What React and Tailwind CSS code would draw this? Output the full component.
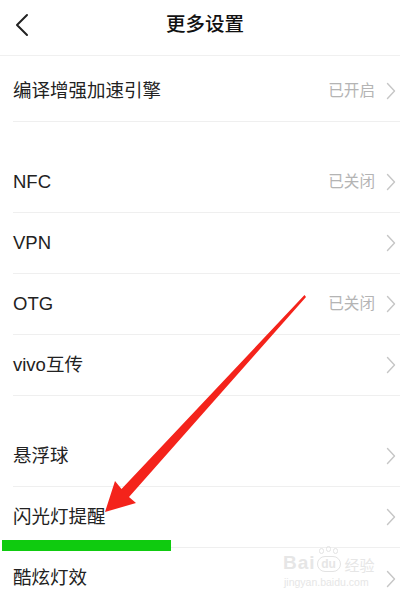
import React from "react";

const Chevron = () => (
  <svg width="10" height="18" viewBox="0 0 10 18" className="shrink-0">
    <path d="M1.5 1.5 L8.5 9 L1.5 16.5" fill="none" stroke="#c6c6c6" strokeWidth="1.4" strokeLinecap="round" strokeLinejoin="round" />
  </svg>
);

const Row = ({ label, value, last }) => (
  <div className="h-[61px] flex items-center pl-[13px]">
    <div className={"h-full flex-1 flex items-center pr-[4px] " + (last ? "" : "border-b border-[#efefef]")}>
      <span className="flex-1 text-[18.5px] text-[#222222] leading-none">{label}</span>
      {value && <span className="text-[15.6px] text-[#b4b4b4] mr-[11px] leading-none">{value}</span>}
      <Chevron />
    </div>
  </div>
);

export default function App() {
  return (
    <div
      className="relative w-[400px] h-[601px] overflow-hidden bg-white"
      style={{ fontFamily: '"Liberation Sans", "Noto Sans CJK SC", sans-serif' }}
    >
      <div className="h-[56px] flex items-center justify-center relative border-b border-[#f0f0f0]">
        <svg width="16" height="24" viewBox="0 0 16 24" className="absolute left-[14px] top-[13px]">
          <path d="M13 2 L3 12 L13 22" fill="none" stroke="#222" strokeWidth="2" strokeLinecap="round" strokeLinejoin="round" />
        </svg>
        <span className="text-[19.5px] text-[#111] font-medium leading-none ml-[10px] -mt-[6px]">更多设置</span>
      </div>
      <div className="h-[5px]" />
      <Row label="编译增强加速引擎" value="已开启" />
      <div className="h-[30px]" />
      <Row label="NFC" value="已关闭" />
      <Row label="VPN" />
      <Row label="OTG" value="已关闭" />
      <Row label="vivo互传" />
      <div className="h-[30px]" />
      <Row label="悬浮球" />
      <Row label="闪光灯提醒" />
      <Row label="酷炫灯效" last />

      {/* overlays */}
      <div className="absolute left-[2px] top-[540px] w-[169px] h-[11px] bg-[#0fcb0f]" />
      <svg className="absolute left-0 top-0" width="400" height="601" viewBox="0 0 400 601">
        <polygon
          points="105,512 115,481 121.5,489 304.5,295 306,297 129,497 136,503"
          fill="#f4231b"
        />
      </svg>
      <div className="absolute left-[283px] top-[546px] flex items-end text-[#e6e6e6] leading-none select-none">
        <span className="text-[19px] font-bold tracking-[1px]">Bai</span>
        <span className="relative w-[26px] h-[26px] flex items-end justify-center">
          <span className="absolute left-[3px] top-[2px] w-[5px] h-[6px] rounded-full border border-[#e3e3e3]" />
          <span className="absolute left-[10px] top-0 w-[5px] h-[6px] rounded-full border border-[#e3e3e3]" />
          <span className="absolute left-[17px] top-[2px] w-[5px] h-[6px] rounded-full border border-[#e3e3e3]" />
          <span className="w-[24px] h-[16px] rounded-[8px] border border-[#e3e3e3] text-[12px] font-bold text-center leading-[14px]">du</span>
        </span>
        <span className="text-[15px] ml-[3px]" style={{ fontFamily: '"Noto Sans CJK SC", sans-serif' }}>经验</span>
      </div>
      <div className="absolute left-[284px] top-[577px] text-[10.5px] text-[#e6e6e6] leading-none">jingyan.baidu.com</div>
    </div>
  );
}
